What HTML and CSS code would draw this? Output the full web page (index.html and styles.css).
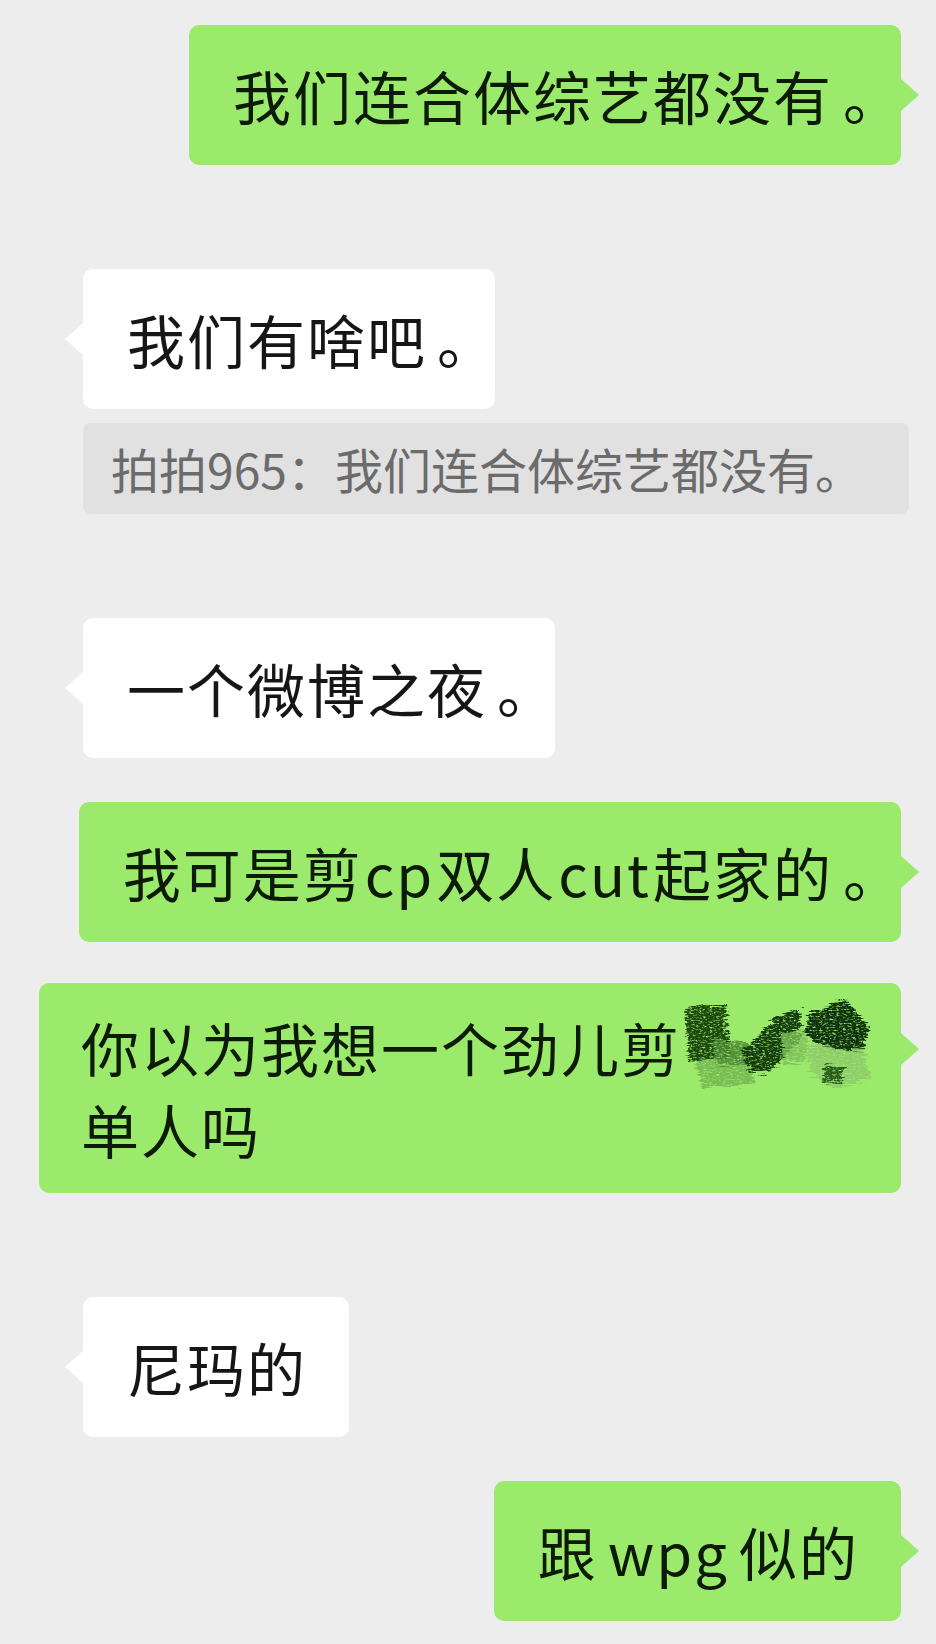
FILE: index.html
```html
<!DOCTYPE html>
<html lang="zh-CN">
<head>
<meta charset="utf-8">
<title>聊天记录</title>
<link rel="stylesheet" href="styles.css">
</head>
<body>
<div class="chat">
  <div class="row right"><div class="bubble green">我们连合体综艺都没有<span class="stop">。</span></div></div>
  <div class="row left gap-lg"><div class="bubble white">我们有啥吧<span class="stop">。</span></div></div>
  <div class="row left gap-xs"><div class="quote">拍拍965：我们连合体综艺都没有。</div></div>
  <div class="row left gap-lg"><div class="bubble white">一个微博之夜<span class="stop">。</span></div></div>
  <div class="row right gap-sm"><div class="bubble green">我可是剪<span class="latin">cp</span>双人<span class="latin">cut</span>起家的<span class="stop">。</span></div></div>
  <div class="row right gap-tight"><div class="bubble green multi">你以为我想一个劲儿剪<svg class="mosaic" viewBox="0 0 188 90" width="188" height="90" aria-hidden="true"><defs><filter id="rough" x="-15%" y="-15%" width="130%" height="130%"><feTurbulence type="fractalNoise" baseFrequency="0.04 0.5" numOctaves="2" seed="4" result="n"/><feDisplacementMap in="SourceGraphic" in2="n" scale="14" xChannelSelector="R" yChannelSelector="G" result="d"/><feTurbulence type="fractalNoise" baseFrequency="0.3 0.7" numOctaves="3" seed="11" result="s"/><feColorMatrix in="s" type="matrix" values="0 0 0 0 0  0 0 0 0 0  0 0 0 0 0  3.2 0 0 0 -0.6" result="m"/><feComposite in="d" in2="m" operator="in"/></filter></defs><g filter="url(#rough)"><polygon points="10,42 62,48 72,86 18,88" fill="#6fae4c" opacity="0.75"/><polygon points="2,10 42,4 48,58 6,62" fill="#1a4711"/><polygon points="30,40 64,44 62,68 34,66" fill="#4f8a36" opacity="0.85"/><polygon points="58,54 94,18 118,10 116,44 84,74 64,72" fill="#143c0b"/><polygon points="98,34 126,30 122,62 100,66" fill="#7dbb58" opacity="0.8"/><polygon points="126,14 162,0 186,28 180,54 142,50 122,34" fill="#0d3307"/><polygon points="122,46 182,50 186,80 152,90 128,74" fill="#8ecb69" opacity="0.9"/><polygon points="142,66 162,70 158,86 140,82" fill="#2c5c1c"/></g></svg>单人吗</div></div>
  <div class="row left gap-lg"><div class="bubble white">尼玛的</div></div>
  <div class="row right gap-sm"><div class="bubble green">跟 wpg 似的</div></div>
</div>
</body>
</html>
```
FILE: styles.css
```css
html, body {
  margin: 0;
  padding: 0;
}
body {
  background: #ededed;
  font-family: "Noto Sans CJK SC", "Noto Sans", sans-serif;
  width: 936px;
  height: 1644px;
  overflow: hidden;
}
.chat {
  display: flex;
  flex-direction: column;
  padding: 25px 35px 0 39px;
}
.row {
  display: flex;
}
.row.left {
  justify-content: flex-start;
  padding-left: 44px;
}
.row.right {
  justify-content: flex-end;
}
.gap-lg { margin-top: 104px; }
.gap-sm { margin-top: 44px; }
.gap-tight { margin-top: 41px; }
.gap-xs { margin-top: 14px; }

.bubble {
  position: relative;
  box-sizing: border-box;
  max-width: 100%;
  white-space: nowrap;
  font-size: 58px;
  line-height: 80px;
  letter-spacing: 2px;
  word-spacing: -5px;
  padding: 30px 42px 30px 44px;
  border-radius: 10px;
  color: #111;
}
.bubble.multi {
  white-space: normal;
  padding-top: 24px;
  padding-bottom: 24px;
  padding-left: 42px;
}
.stop {
  letter-spacing: 0;
  margin-left: 10px;
  margin-right: -42px;
}
.latin {
  margin: 0 2px;
}
.green {
  background: #9bea6c;
  color: #0c1a06;
}
.white {
  background: #ffffff;
  color: #161616;
}
.bubble::after {
  content: "";
  position: absolute;
  top: 54px;
  width: 18px;
  height: 32px;
}
.multi::after {
  top: 50px;
}
.green::after {
  left: 100%;
  background: #9bea6c;
  clip-path: polygon(0 0, 100% 50%, 0 100%);
}
.white::after {
  right: 100%;
  background: #ffffff;
  clip-path: polygon(100% 0, 0 50%, 100% 100%);
}
.mosaic {
  display: inline-block;
  vertical-align: top;
  margin-left: 2px;
  margin-right: -30px;
  margin-top: -8px;
}
.quote {
  flex-shrink: 0;
  white-space: nowrap;
  background: #e1e1e1;
  color: #6b6b6b;
  font-size: 48px;
  line-height: 61px;
  padding: 15px 46px 15px 28px;
  border-radius: 8px;
}
```
